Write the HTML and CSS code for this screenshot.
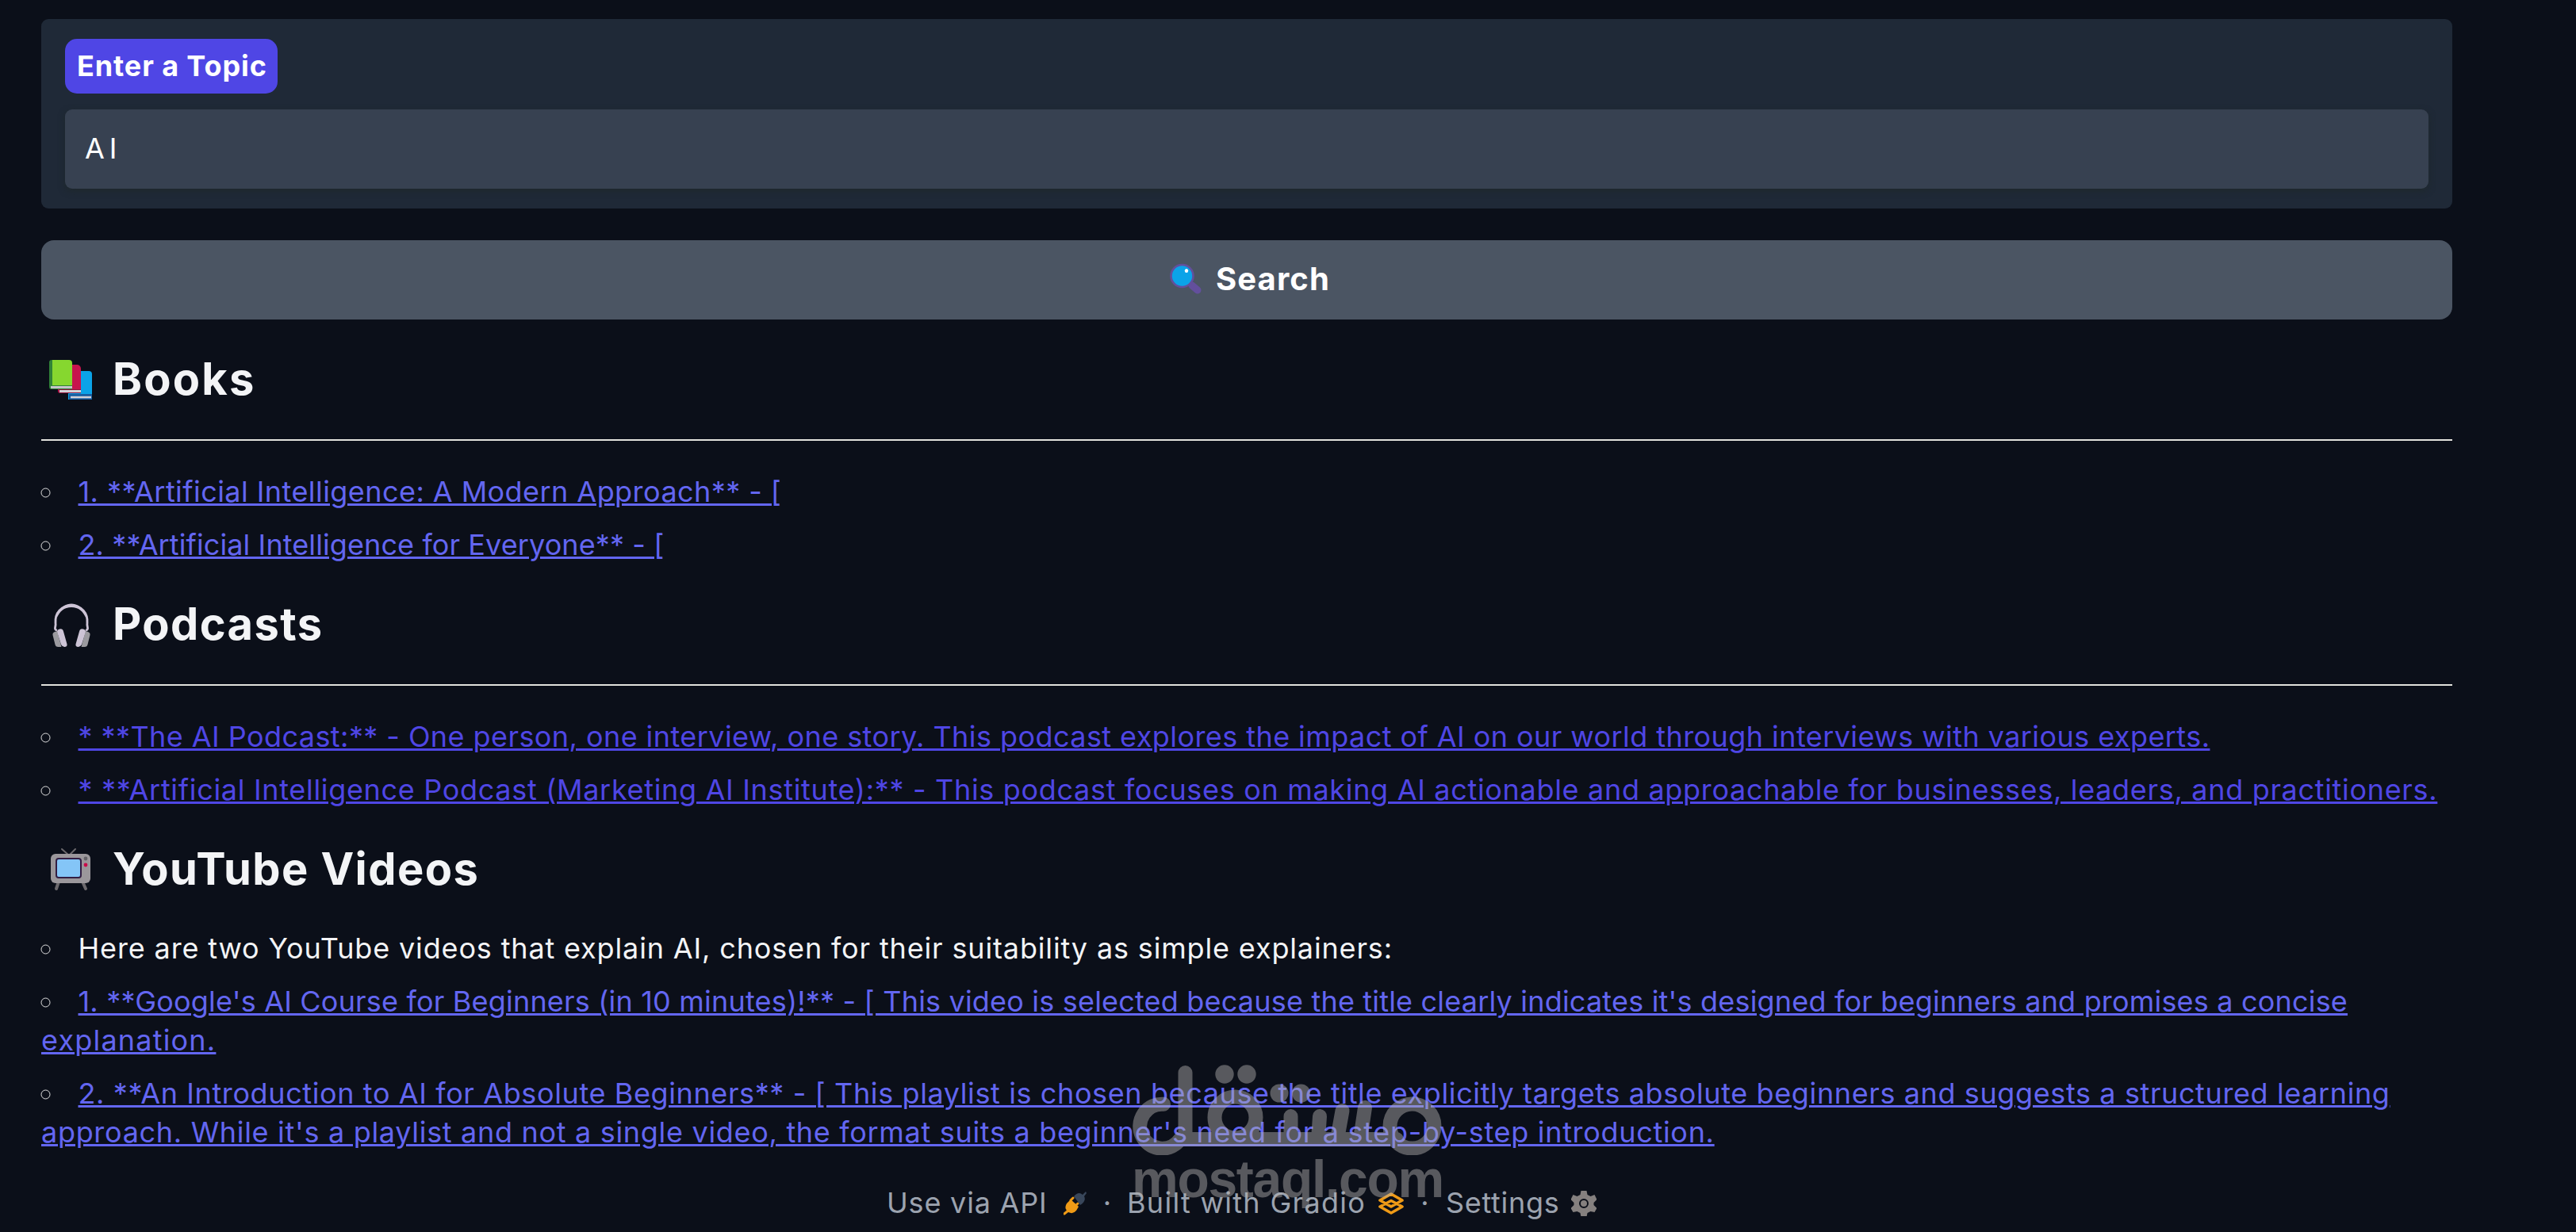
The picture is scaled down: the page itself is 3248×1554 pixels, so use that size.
FILE: index.html
```html
<!DOCTYPE html>
<html lang="en">
  <head>
    <meta charset="UTF-8" />
    <title>Topic Search</title>
    <link rel="stylesheet" href="styles.css">
  </head>
  <body>
    <main class="app">
      <!-- Topic input -->
      <div class="block">
        <label class="label" for="topic">Enter a Topic</label>
        <input class="topic-input" id="topic" type="text" value="AI" />
      </div>

      <button class="search-btn">
        <svg class="search-icon" viewBox="0 0 40 40">
          <path d="M28 28 L35 34" stroke="#634f9c" stroke-width="9" stroke-linecap="round" />
          <circle cx="15.5" cy="16" r="14" fill="#0ba3e8" stroke="#634f9c" stroke-width="2.6" />
          <ellipse cx="21" cy="9.5" rx="2.2" ry="2.6" fill="#fff" />
        </svg>
        <span class="search-text">Search</span>
      </button>

      <!-- Books -->
      <h2 class="heading">
        <svg class="icon" viewBox="0 0 60 60">
          <path d="M29 17h26a4 4 0 0 1 4 4v32H29z" fill="#0ba3e8" />
          <path d="M30 46h29v7H30z" fill="#175da0" />
          <path d="M32 48.800h26v2.500H32z" fill="#d3d3d8" />
          <path d="M16 9h24a5 5 0 0 1 5 5v31H19a3 3 0 0 1-3-3z" fill="#c7134d" />
          <path d="M17 40h28v5H19a2 2 0 0 1-2-2z" fill="#92133c" />
          <path d="M18 41h27v3H18z" fill="#d3d3d8" />
          <path d="M8 3h22a4 4 0 0 1 4 4v32H8z" fill="#86d72f" />
          <path d="M8 3a3 3 0 0 0-3 3v31a3 3 0 0 0 3 3h26v-5H9V3z" fill="#308238" />
          <path d="M7 36h27v3H7z" fill="#c5c5c9" />
        </svg>
        <span class="title title-books">Books</span>
      </h2>
      <hr class="divider" />
      <ul class="list">
        <li><a class="link t1" href="#">1. **Artificial Intelligence: A Modern Approach** - [</a></li>
        <li><a class="link t2" href="#">2. **Artificial Intelligence for Everyone** - [</a></li>
      </ul>

      <!-- Podcasts -->
      <h2 class="heading">
        <svg class="icon" viewBox="-3 0 60 60">
          <path d="M12 35c-5-1-1-5-2-9C9 13 17 4 30 4s21 9 20 22c-1 4 3 8-2 9" fill="none" stroke="#cdc4d6" stroke-width="2.800" />
          <path d="M11 21C13 9 20 1.500 30 1.500S47 9 49 21C45 11 39 6 30 6s-15 5-19 15z" fill="#cdc4d6" />
          <path d="M12 36l-3 1q-3 1-2.500 4l3 12q.5 3 4 3h4zM48 36l3 1q3 1 2.500 4l-3 12q-.5 3-4 3h-4z" fill="#9b9a9f" />
          <path d="M12 37q0-3 3-3.500 4-1 5 3l4.500 16q.5 3-2.500 3.500t-5-3zM48 37q0-3-3-3.500-4-1-5 3l-4.500 16q-.5 3 2.500 3.500t5-3z" fill="#cdc4d6" />
        </svg>
        <span class="title title-podcasts">Podcasts</span>
      </h2>
      <hr class="divider" />
      <ul class="list">
        <li><a class="link visited t3" href="#">* **The AI Podcast:** - One person, one interview, one story. This podcast explores the impact of AI on our world through interviews with various experts.</a></li>
        <li><a class="link visited t4" href="#">* **Artificial Intelligence Podcast (Marketing AI Institute):** - This podcast focuses on making AI actionable and approachable for businesses, leaders, and practitioners.</a></li>
      </ul>

      <!-- YouTube -->
      <h2 class="heading heading-tv">
        <svg class="icon" viewBox="-3 0 60 60">
          <path d="M18 2l9 8L35 2" fill="none" stroke="#6c696d" stroke-width="2" stroke-linecap="round" />
          <path d="M14 43l-3 9M44 43l4 9" stroke="#6c696d" stroke-width="4" stroke-linecap="round" />
          <rect x="4" y="8" width="50" height="37" rx="6" fill="#9b979b" />
          <rect x="11" y="14" width="31" height="24" rx="3" fill="#84c5f7" stroke="#321e43" stroke-width="2" />
          <circle cx="48" cy="14" r="2.400" fill="#646267" />
          <circle cx="48" cy="22" r="2.400" fill="#ca0b4a" />
        </svg>
        <span class="title title-youtube">YouTube Videos</span>
      </h2>
      <ul class="list">
        <li><span class="plain t5">Here are two YouTube videos that explain AI, chosen for their suitability as simple explainers:</span></li>
        <li><a class="link" href="#"><span class="t6">1. **Google's AI Course for Beginners (in 10 minutes)!** - [ This video is selected because the title clearly indicates it's designed for beginners and promises a concise</span><br><span class="t7">explanation.</span></a></li>
        <li><a class="link" href="#"><span class="t8">2. **An Introduction to AI for Absolute Beginners** - [ This playlist is chosen because the title explicitly targets absolute beginners and suggests a structured learning</span><br><span class="t9">approach. While it's a playlist and not a single video, the format suits a beginner's need for a step-by-step introduction.</span></a></li>
      </ul>
    </main>

    <footer class="footer">
      <span class="foot-api">Use via API</span>
      <svg class="api-icon" viewBox="0 0 30 30">
        <path d="M1 28l5-4M9 11l3-3M15 18l3-3" stroke="#ef9a16" stroke-width="3" stroke-linecap="round" />
        <path d="M4 15l5-5 10 9-3 5q-4 5-10 2-6-5-2-11z" fill="#ef9a16" />
        <path d="M13 6q6-7 11-2l4-4 1 2-3 4q3 6-5 11z" fill="#38465a" />
      </svg>
      <span class="dot">·</span>
      <span class="foot-built">Built with Gradio</span>
      <svg class="gradio-icon" viewBox="0 0 32 28">
        <path d="M16 2L30 10 16 18 2 10zM16 10.500L30 18 16 26 2 18z" fill="none" stroke="#ef9a16" stroke-width="3.600" stroke-linejoin="round" />
      </svg>
      <span class="dot dot-last">·</span>
      <span class="foot-settings">Settings</span>
      <svg class="gear-icon" viewBox="0 0 32 32">
        <path d="M12.500 0h7l1 5 4 2 5-2 3 6-4 4v3l4 4-3 5-5-1-4 2-1 5h-7l-1-5-4-2-5 1-3-5 4-4v-3l-4-4 3-6 5 2 4-2z" fill="#85807f" />
        <circle cx="16" cy="16" r="5" fill="#85807f" stroke="#0b0f19" stroke-width="2" />
      </svg>
    </footer>

    <!-- Watermark over the page -->
    <div class="watermark">
      <svg class="wm-logo" viewBox="0 0 392 115">
        <g fill="none" stroke="#b6b4b2" stroke-width="18" stroke-linecap="round">
          <path d="M40 50.700A28 28 0 1 0 61 95H334" />
          <path d="M67.500 11V95" />
          <circle cx="130.500" cy="67.500" r="26" />
          <path d="M200.500 66V95M237 66L235 95M265.500 59L259 95M294 55L288 95" />
          <circle cx="353.500" cy="78.500" r="28" />
        </g>
        <g fill="#b6b4b2">
          <circle cx="117" cy="13" r="11.700" />
          <circle cx="145" cy="13" r="11.700" />
          <circle cx="186" cy="37" r="11.500" />
          <circle cx="213.500" cy="37" r="11.500" />
        </g>
      </svg>
      <div class="wm-text">mostaql.com</div>
    </div>
  </body>
</html>
```

FILE: styles.css
```css
* {
  box-sizing: border-box;
}

body {
  margin: 0;
  height: 1554px;
  overflow: hidden;
  position: relative;
  background-color: #0b0f19;
  color: #f3f4f6;
  font-family: Inter, "Open Sans", sans-serif;
  font-size: 34.5px;
  line-height: 49px;
}

.app {
  width: 3040px;
  margin-left: 52px;
  padding-top: 24px;
}

.block {
  height: 239px;
  padding: 25px 30px;
  border-radius: 9px;
  background-color: #1f2937;
}

.label {
  display: block;
  width: 268px;
  height: 69px;
  padding-left: 15px;
  border-radius: 15px;
  background-color: #4f46e5;
  color: #fff;
  font-size: 36px;
  font-weight: 700;
  letter-spacing: 0.9px;
  line-height: 69px;
  white-space: nowrap;
}

.topic-input {
  display: block;
  width: 100%;
  height: 100px;
  margin-top: 20px;
  padding: 0 25px 2px;
  border: none;
  border-radius: 9px;
  background-color: #374151;
  box-shadow: 0 3px 8px rgba(30, 40, 40, 0.7);
  color: #fff;
  font: inherit;
  font-size: 36px;
  letter-spacing: 6px;
}

.search-btn {
  display: flex;
  align-items: center;
  justify-content: center;
  gap: 18px;
  width: 100%;
  height: 100px;
  margin-top: 40px;
  padding: 0 0 0 8px;
  border: none;
  border-radius: 16px;
  background-color: #4b5563;
  color: #fff;
  font: inherit;
  font-size: 40px;
  font-weight: 700;
}

.search-icon {
  width: 40px;
  height: 40px;
  margin-bottom: 2px;
}

.search-text {
  margin-bottom: 4px;
  letter-spacing: 1.1px;
}

.heading {
  display: flex;
  align-items: center;
  height: 60px;
  margin: 48px 0 0;
  padding-left: 5px;
  font-size: 56px;
  font-weight: 700;
  line-height: 60px;
}

.icon {
  width: 60px;
  height: 60px;
  margin-right: 25px;
}

.title {
  margin-bottom: 6px;
}

.title-books {
  letter-spacing: 2.2px;
}

.title-podcasts {
  letter-spacing: 1.4px;
}

.title-youtube {
  letter-spacing: 1.4px;
}

.divider {
  height: 2px;
  margin: 43px 0 40px;
  border: none;
  background-color: #e2e2dc;
}

.list {
  margin: 0;
  padding: 0;
  list-style: circle inside;
}

.list li {
  margin-bottom: 18px;
  white-space: nowrap;
}

.list li::marker {
  color: #e5e5e5;
}

.heading-tv + .list {
  margin-top: 43px;
}

.link,
.plain {
  font-size: 36px;
  line-height: 1;
}

.link {
  color: #6366f1;
  text-decoration: underline;
  text-decoration-thickness: 3px;
}

.visited {
  color: #4f46e5;
}

/* Tracking of each line */
.t1 {
  letter-spacing: 0.44px;
}

.t2 {
  letter-spacing: 0.1px;
}

.t3 {
  letter-spacing: 0.43px;
}

.t4 {
  letter-spacing: 0.68px;
}

.t5 {
  letter-spacing: 0.85px;
}

.t6 {
  letter-spacing: 0.19px;
}

.t7 {
  letter-spacing: 1.2px;
}

.t8 {
  letter-spacing: 0.61px;
}

.t9 {
  letter-spacing: 0.69px;
}

.footer {
  display: flex;
  align-items: center;
  height: 49px;
  margin-top: 40px;
  margin-left: 1118px;
  color: #9ca3af;
  font-size: 36px;
  white-space: nowrap;
}

.foot-api {
  width: 223px;
  letter-spacing: 0.8px;
}

.api-icon {
  width: 30px;
  height: 30px;
}

.dot {
  width: 50px;
  text-align: center;
}

.dot-last {
  width: 53px;
}

.foot-built {
  width: 317px;
  letter-spacing: 1.3px;
}

.gradio-icon {
  width: 32px;
  height: 28px;
}

.foot-settings {
  width: 158px;
  letter-spacing: 0.7px;
}

.gear-icon {
  width: 32px;
  height: 32px;
}

.watermark {
  position: absolute;
  left: 1427px;
  top: 1342px;
  width: 392px;
  opacity: 0.45;
}

.wm-logo {
  display: block;
  width: 392px;
  height: 115px;
}

.wm-text {
  margin-top: -3px;
  color: #b6b4b2;
  font-family: "Liberation Sans", Arial, sans-serif;
  font-size: 66px;
  font-weight: 700;
  letter-spacing: -1.3px;
  line-height: 66px;
}
```
